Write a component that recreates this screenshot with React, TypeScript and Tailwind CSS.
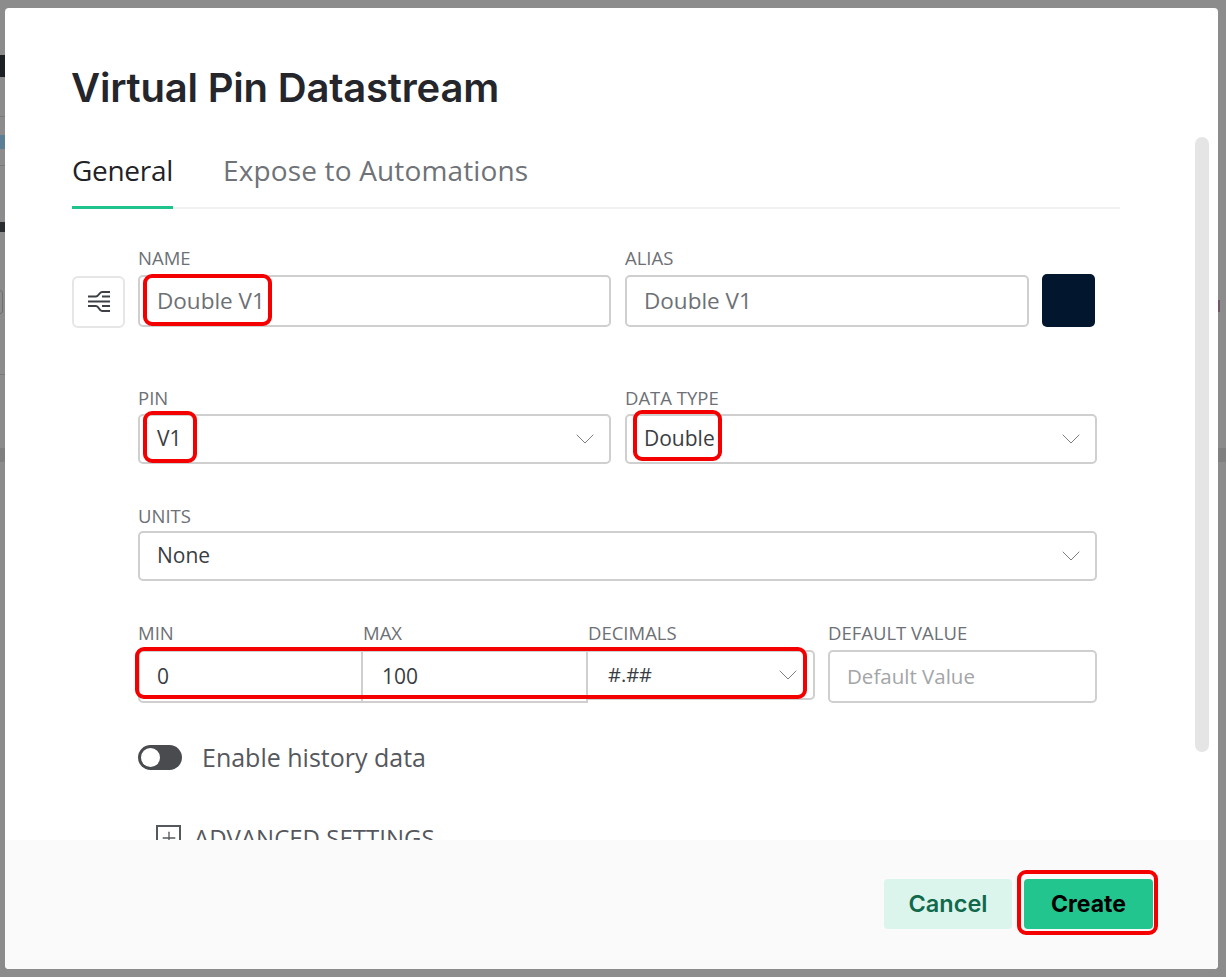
import type { ReactNode } from "react";
import { ChevronDown, Plus } from "lucide-react";

const body = "font-['Open_Sans','Noto_Sans',sans-serif]";
const boxBase = "relative border-2 border-[#cfcfcf] rounded-[5px] bg-white flex items-center";

function Label({ children }: { children: ReactNode }) {
  return <div className="h-[28px] text-[18.5px] leading-[26px] text-[#6d7075] whitespace-nowrap">{children}</div>;
}

function Highlight({ className }: { className: string }) {
  return <div className={`absolute border-[4px] border-[#f50000] rounded-[9px] ${className}`} />;
}

function Select({ value, className, children }: { value: string; className?: string; children?: ReactNode }) {
  return (
    <div className={`${boxBase} h-[50px] pl-[17px] pr-[8px] justify-between text-[21px] text-[#3a3d42] ${className ?? ""}`}>
      <span>{value}</span>
      <ChevronDown className="w-[32px] h-[32px] text-[#7b7e82]" strokeWidth={0.75} />
      {children}
    </div>
  );
}

function SettingsIcon() {
  return (
    <svg width="22" height="22" viewBox="0 0 22 22" fill="none" stroke="#3d4045" strokeWidth="2">
      <path d="M0 5.5h8c3 0 3-4.5 6-4.5h8" />
      <path d="M14 5.5h8" />
      <path d="M0 10.5h22" />
      <path d="M0 15h8c3 0 3 5 6 5h8" />
      <path d="M14 15h8" />
    </svg>
  );
}

export default function App() {
  return (
    <div className={`relative w-[1226px] h-[977px] overflow-hidden bg-[#8c8c8c] pl-[5px] pt-[8px] ${body}`}>
      {/* PAGE BEHIND THE OVERLAY */}
      <div className="absolute left-0 top-[55px] w-[5px] h-[22px] bg-[#1c1f24]" />
      <div className="absolute left-0 top-[116px] w-[5px] h-px bg-[#7a7a7a]" />
      <div className="absolute left-0 top-[135px] w-[5px] h-[14px] bg-[#5b7f95]" />
      <div className="absolute left-0 top-[165px] w-[5px] h-px bg-[#7a7a7a]" />
      <div className="absolute left-0 top-[222px] w-[5px] h-[10px] bg-[#2a2c30]" />
      <div className="absolute -left-[4px] top-[290px] w-[7px] h-[24px] border border-[#6f6f6f] rounded-[3px]" />
      <div className="absolute left-0 top-[374px] w-[5px] h-px bg-[#7a7a7a]" />
      <div className="absolute left-0 top-[448px] w-[5px] h-[14px] bg-[#808080]" />
      <div className="absolute right-[6px] top-[300px] w-[2px] h-[12px] bg-[#74566a]" />
      <div className="absolute right-0 top-[448px] w-[8px] h-[14px] bg-[#808080]" />

      {/* MODAL */}
      <div className="relative w-[1213px] h-[961px] bg-white rounded-[4px] flex flex-col overflow-hidden">
        <div className="h-[832px] overflow-hidden pt-[54px]">
          <h1 className="pl-[66px] h-[52px] font-['Inter',sans-serif] font-semibold text-[40px] leading-[52px] tracking-[-0.2px] text-[#24262b]">
            Virtual Pin Datastream
          </h1>

          {/* TABS */}
          <div className="ml-[67px] w-[1048px] mt-[33px] h-[62px] flex gap-[50px] border-b-2 border-[#f1f1f1] text-[28px]">
            <div className="h-[62px] w-[101px] leading-[46px] tracking-[-0.3px] text-[#1f2226] border-b-[3px] border-[#1fc48d]">General</div>
            <div className="leading-[46px] tracking-[0.15px] text-[#6f7378] whitespace-nowrap">Expose to Automations</div>
          </div>

          {/* NAME ROW */}
          <div className="mt-[36px] ml-[67px] flex items-start">
            <div className="mt-[31px] w-[53px] h-[52px] border-2 border-[#e6e6e6] rounded-[6px] flex items-center justify-center">
              <SettingsIcon />
            </div>
            <div className="ml-[13px] w-[473px]">
              <Label>NAME</Label>
              <div className={`${boxBase} mt-[2px] h-[52px] pl-[17px] text-[22.5px] text-[#6d7075]`}>
                Double V1
                <Highlight className="left-[3px] -top-[3px] w-[129px] h-[52px]" />
              </div>
            </div>
            <div className="ml-[14px] w-[404px]">
              <Label>ALIAS</Label>
              <div className={`${boxBase} mt-[2px] h-[52px] pl-[17px] text-[22.5px] text-[#6d7075]`}>Double V1</div>
            </div>
            <div className="ml-[13px] mt-[29px] w-[53px] h-[53px] rounded-[5px] bg-[#02172e]" />
          </div>

          {/* PIN ROW */}
          <div className="mt-[57px] ml-[133px] w-[959px] grid grid-cols-[473px_472px] gap-x-[14px]">
            <div>
              <Label>PIN</Label>
              <Select value="V1" className="mt-[1px]">
                <Highlight className="left-[3px] -top-[5px] w-[54px] h-[52px]" />
              </Select>
            </div>
            <div>
              <Label>DATA TYPE</Label>
              <Select value="Double" className="mt-[1px]">
                <Highlight className="left-[6px] -top-[6px] w-[89px] h-[51px]" />
              </Select>
            </div>
          </div>

          {/* UNITS */}
          <div className="mt-[39px] ml-[133px] w-[959px]">
            <Label>UNITS</Label>
            <Select value="None" />
          </div>

          {/* MIN MAX DECIMALS */}
          <div className="relative mt-[39px] ml-[133px] w-[959px] flex">
            <div className="w-[225px]">
              <Label>MIN</Label>
              <div className={`${boxBase} mt-[2px] h-[53px] pl-[17px] rounded-r-none text-[21px] text-[#3a3d42]`}>0</div>
            </div>
            <div className="w-[225px]">
              <Label>MAX</Label>
              <div className={`${boxBase} mt-[2px] h-[53px] pl-[19px] rounded-none border-l-0 text-[21px] text-[#3a3d42]`}>100</div>
            </div>
            <div className="w-[227px]">
              <Label>DECIMALS</Label>
              <div className={`${boxBase} mt-[2px] h-[50px] pl-[20px] pr-[9px] rounded-l-none border-l-0 justify-between text-[20px] text-[#3a3d42]`}>
                #.##
                <ChevronDown className="w-[32px] h-[32px] text-[#7b7e82]" strokeWidth={0.75} />
              </div>
            </div>
            <div className="ml-[13px] w-[269px]">
              <Label>DEFAULT VALUE</Label>
              <div className={`${boxBase} mt-[2px] h-[53px] pl-[17px] text-[20.5px] text-[#a3a5a8]`}>Default Value</div>
            </div>
            <Highlight className="-left-[3px] top-[27px] w-[672px] h-[52px]" />
          </div>

          {/* HISTORY TOGGLE */}
          <div className="mt-[36px] ml-[133px] flex items-center gap-[20px]">
            <div className="w-[44px] h-[25px] rounded-full bg-[#4a4b4f] flex items-center pl-[3px]">
              <div className="w-[19px] h-[19px] rounded-full bg-white" />
            </div>
            <span className="text-[25px] text-[#55585d]">Enable history data</span>
          </div>

          {/* ADVANCED SETTINGS */}
          <div className="mt-[43px] ml-[151px] flex items-center gap-[13px]">
            <div className="w-[25px] h-[25px] border-2 border-[#55585d] flex items-center justify-center">
              <Plus className="w-[20px] h-[20px] text-[#55585d]" strokeWidth={1.6} />
            </div>
            <span className="text-[24px] text-[#55585d]">ADVANCED SETTINGS</span>
          </div>
        </div>

        {/* FOOTER */}
        <div className="flex-1 bg-[#fafafa] flex justify-end gap-[12px] pr-[65px] pt-[39px]">
          <button className="w-[128px] h-[50px] rounded-[4px] bg-[#dcf5ec] font-['Inter',sans-serif] font-semibold text-[23.5px] text-[#11694c]">
            Cancel
          </button>
          <div className="relative">
            <button className="w-[129px] h-[50px] rounded-[4px] bg-[#22c58e] font-['Inter',sans-serif] font-bold text-[23px] text-black">
              Create
            </button>
            <Highlight className="-left-[7px] -top-[9px] w-[141px] h-[65px]" />
          </div>
        </div>

        {/* SCROLLBAR */}
        <div className="absolute left-[1190px] top-[129px] w-[14px] h-[615px] rounded-full bg-[#e5e5e5]" />
      </div>
    </div>
  );
}
